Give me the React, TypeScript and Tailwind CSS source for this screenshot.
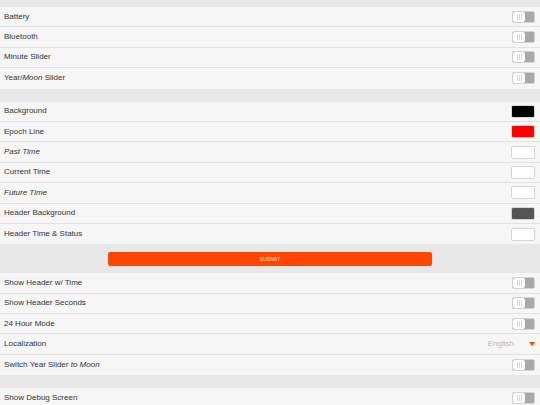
import React from 'react';

type Row =
  | { kind: 'toggle'; label: React.ReactNode }
  | { kind: 'color'; label: React.ReactNode; color: string }
  | { kind: 'select'; label: React.ReactNode; value: string };

const group1: Row[] = [
  { kind: 'toggle', label: 'Battery' },
  { kind: 'toggle', label: 'Bluetooth' },
  { kind: 'toggle', label: 'Minute Slider' },
  { kind: 'toggle', label: <>Year/<i>Moon</i> Slider</> },
];

const group2: Row[] = [
  { kind: 'color', label: 'Background', color: '#000000' },
  { kind: 'color', label: 'Epoch Line', color: '#ff0000' },
  { kind: 'color', label: <i>Past Time</i>, color: '#ffffff' },
  { kind: 'color', label: 'Current Time', color: '#ffffff' },
  { kind: 'color', label: <i>Future Time</i>, color: '#ffffff' },
  { kind: 'color', label: 'Header Background', color: '#555555' },
  { kind: 'color', label: 'Header Time & Status', color: '#ffffff' },
];

const group3: Row[] = [
  { kind: 'toggle', label: 'Show Header w/ Time' },
  { kind: 'toggle', label: 'Show Header Seconds' },
  { kind: 'toggle', label: '24 Hour Mode' },
  { kind: 'select', label: 'Localization', value: 'English' },
  { kind: 'toggle', label: <>Switch Year Slider <i>to Moon</i></> },
];

const group4: Row[] = [{ kind: 'toggle', label: 'Show Debug Screen' }];

const Toggle = () => (
  <div className="flex h-[12px] w-[23px] overflow-hidden rounded-[2px] border border-[#d4d4d4] bg-[#a9a9a9]">
    <div className="flex h-full w-[12px] items-center justify-center gap-[1px] rounded-[2px] bg-white">
      <span className="h-[6px] w-px bg-[#d8d8d8]" />
      <span className="h-[6px] w-px bg-[#d8d8d8]" />
      <span className="h-[6px] w-px bg-[#d8d8d8]" />
    </div>
  </div>
);

const Swatch = ({ color }: { color: string }) => (
  <div
    className="h-[13px] w-[24px] rounded-[2px] border border-[#d6d6d6]"
    style={{ backgroundColor: color }}
  />
);

const SettingRow = ({ row }: { row: Row }) => (
  <div className="flex h-[20.4px] items-center justify-between border-b border-[#e2e2e2] bg-[#f6f6f6] pl-[4px] pr-[5px] last:border-b-0">
    <span className="text-[8px] text-[#333333]">{row.label}</span>
    {row.kind === 'toggle' && <Toggle />}
    {row.kind === 'color' && <Swatch color={row.color} />}
    {row.kind === 'select' && (
      <div className="flex items-center">
        <span className="mr-[15px] text-[8px] text-[#b5b5b5]">{row.value}</span>
        <span className="h-0 w-0 border-x-[3px] border-t-[4px] border-x-transparent border-t-[#ff4500]" />
      </div>
    )}
  </div>
);

const Group = ({ rows }: { rows: Row[] }) => (
  <div className="flex flex-col">
    {rows.map((r, i) => (
      <SettingRow key={i} row={r} />
    ))}
  </div>
);

export default function App() {
  return (
    <div
      className="h-[405px] w-[540px] overflow-hidden bg-[#e8e8e8]"
      style={{ fontFamily: '"Liberation Sans", Arial, sans-serif' }}
    >
      <div className="h-[7px]" />
      <Group rows={group1} />
      <div className="h-[13px]" />
      <Group rows={group2} />
      <div className="flex h-[29px] items-center justify-center">
        <button className="flex h-[14.5px] w-[324px] items-center justify-center rounded-[2px] bg-[#ff4500] text-[5.5px] text-[#ffe0d4]">
          SUBMIT
        </button>
      </div>
      <Group rows={group3} />
      <div className="h-[13px]" />
      <Group rows={group4} />
    </div>
  );
}
